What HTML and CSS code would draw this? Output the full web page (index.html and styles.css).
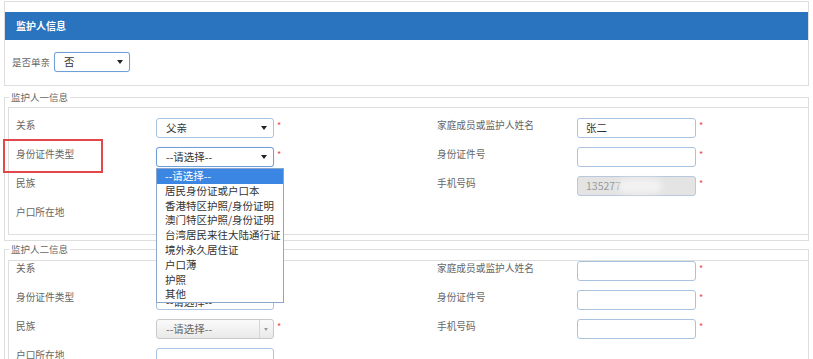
FILE: index.html
```html
<!DOCTYPE html>
<html lang="zh-CN">
<head>
    <meta charset="UTF-8">
    <title>监护人信息</title>
    <link rel="stylesheet" href="styles.css">
</head>
<body>
    <div class="panel">
        <div class="panel-title">监护人信息</div>
        <div class="single-row">
            <span class="single-label">是否单亲</span>
            <div class="select select-single focus"><span>否</span><i class="caret"></i></div>
        </div>
    </div>

    <!-- 监护人一 -->
    <fieldset class="group">
        <legend>监护人一信息</legend>
        <div class="form-grid first">
            <div class="lbl">关系</div>
            <div class="field">
                <div class="select"><span>父亲</span><i class="caret"></i></div>
                <span class="req">*</span>
            </div>
            <div class="lbl">家庭成员或监护人姓名</div>
            <div class="field">
                <div class="input">张二</div>
                <span class="req">*</span>
            </div>

            <div class="lbl marked">身份证件类型</div>
            <div class="field">
                <div class="select focus"><span>--请选择--</span><i class="caret"></i></div>
                <span class="req">*</span>
                <ul class="dropdown">
                    <li class="active">--请选择--</li>
                    <li>居民身份证或户口本</li>
                    <li>香港特区护照/身份证明</li>
                    <li>澳门特区护照/身份证明</li>
                    <li>台湾居民来往大陆通行证</li>
                    <li>境外永久居住证</li>
                    <li>户口薄</li>
                    <li>护照</li>
                    <li>其他</li>
                </ul>
            </div>
            <div class="lbl">身份证件号</div>
            <div class="field">
                <div class="input"></div>
                <span class="req">*</span>
            </div>

            <div class="lbl">民族</div>
            <div class="field">
                <div class="select grey"><i class="btn-caret"></i></div>
                <span class="req">*</span>
            </div>
            <div class="lbl">手机号码</div>
            <div class="field">
                <div class="input disabled">135277<span class="smudge"></span></div>
                <span class="req">*</span>
            </div>

            <div class="lbl">户口所在地</div>
            <div class="field">
                <div class="select"></div>
            </div>
            <div class="lbl"></div>
            <div class="field"></div>
        </div>
    </fieldset>

    <!-- 监护人二 -->
    <fieldset class="group second">
        <legend>监护人二信息</legend>
        <div class="form-grid">
            <div class="lbl">关系</div>
            <div class="field">
                <div class="select"><i class="caret"></i></div>
                <span class="req">*</span>
            </div>
            <div class="lbl">家庭成员或监护人姓名</div>
            <div class="field">
                <div class="input"></div>
                <span class="req">*</span>
            </div>

            <div class="lbl">身份证件类型</div>
            <div class="field">
                <div class="select"><span class="under">--请选择--</span><i class="caret"></i></div>
                <span class="req">*</span>
            </div>
            <div class="lbl">身份证件号</div>
            <div class="field">
                <div class="input"></div>
                <span class="req">*</span>
            </div>

            <div class="lbl">民族</div>
            <div class="field">
                <div class="select grey"><span>--请选择--</span><i class="btn-caret"></i></div>
                <span class="req">*</span>
            </div>
            <div class="lbl">手机号码</div>
            <div class="field">
                <div class="input"></div>
                <span class="req">*</span>
            </div>

            <div class="lbl">户口所在地</div>
            <div class="field">
                <div class="input input-wide"></div>
            </div>
            <div class="lbl"></div>
            <div class="field"></div>
        </div>
    </fieldset>
</body>
</html>
```

FILE: styles.css
```css
* {
    margin: 0;
    padding: 0;
    box-sizing: border-box;
}

body {
    font-family: "Noto Sans CJK SC", "Liberation Sans", sans-serif;
    font-size: 10px;
    color: #666;
    background: #fff;
    width: 813px;
    height: 359px;
    overflow: hidden;
}

.panel {
    margin: 1px 0 0 4px;
    width: 805px;
    border: 1px solid #dedede;
    padding: 10px 0 13px;
}

.panel-title {
    height: 28px;
    line-height: 28px;
    background: #2a74bf;
    color: #fff;
    font-weight: 700;
    font-size: 10px;
    padding-left: 11px;
}

.single-row {
    display: flex;
    align-items: center;
    margin-top: 12px;
    padding-left: 7px;
}

.single-label {
    font-size: 9.5px;
    margin-right: 4px;
    color: #666;
}

.select {
    position: relative;
    width: 118px;
    height: 20px;
    border: 1px solid #a9c2e0;
    border-radius: 3px;
    background: #fff;
    font-size: 10.5px;
    line-height: 18px;
    color: #333;
    padding-left: 9px;
}

.select-single {
    width: 76px;
}

.select.focus {
    border-color: #6e9fd9;
    box-shadow: 0 0 1px rgba(80, 140, 220, 0.4);
}

.caret {
    position: absolute;
    right: 6px;
    top: 7px;
    border-left: 3px solid transparent;
    border-right: 3px solid transparent;
    border-top: 4px solid #222;
}

.select.grey {
    background: linear-gradient(#fafafa, #e9e9e9);
    border-color: #c9c9c9;
    color: #666;
}

.btn-caret {
    position: absolute;
    right: 0;
    top: 0;
    width: 14px;
    height: 18px;
    border-left: 1px solid #d6d6d6;
}

.btn-caret::after {
    content: "";
    position: absolute;
    left: 4px;
    top: 8px;
    border-left: 2px solid transparent;
    border-right: 2px solid transparent;
    border-top: 3px solid #999;
}

.under {
    display: inline-block;
    line-height: 22px;
}

.input {
    position: relative;
    width: 119px;
    height: 20px;
    border: 1px solid #a9c2e0;
    border-radius: 3px;
    background: #fff;
    font-size: 10.5px;
    line-height: 18px;
    color: #333;
    padding-left: 8px;
}

.input-wide {
    width: 118px;
}

.input.disabled {
    background: #e4e4e4;
    border-color: #b9c9dc;
    color: #9a9a9a;
}

.smudge {
    position: absolute;
    left: 40px;
    top: 2px;
    width: 44px;
    height: 14px;
    border-radius: 7px;
    background: #f2f2f2;
    filter: blur(3px);
}

.req {
    color: #e84a4a;
    font-size: 9px;
    line-height: 1;
    margin: 3px 0 0 3px;
}

.group {
    margin: 4px 0 0 4px;
    width: 805px;
    min-width: 0;
    border: 1px solid #dedede;
    padding: 0 0 5px 3px;
}

.group.second {
    margin-top: 1px;
}

.group legend {
    font-size: 9.5px;
    line-height: 14px;
    padding: 0 2px;
    margin-left: 1px;
    color: #666;
}

.form-grid {
    display: grid;
    grid-template-columns: 140px 281px 140px 1fr;
    grid-auto-rows: 29px;
    border-top: 1px solid #dedede;
    border-left: 1px solid #dedede;
    border-bottom: 1px solid #dedede;
    padding-left: 7px;
    margin-top: 4px;
}

.form-grid.first {
    margin-top: 3px;
    padding-top: 10px;
}

.lbl {
    line-height: 14px;
    font-size: 9.7px;
    color: #666;
    white-space: nowrap;
}

.lbl.marked {
    position: relative;
}

.lbl.marked::after {
    content: "";
    position: absolute;
    left: -13px;
    top: -8px;
    width: 96px;
    height: 30px;
    border: 2px solid #e2474a;
}

.field {
    position: relative;
    display: flex;
    align-items: flex-start;
}

.dropdown {
    position: absolute;
    left: 0;
    top: 21px;
    width: 128px;
    z-index: 10;
    list-style: none;
    background: #fff;
    border: 1px solid #8aa7cb;
}

.dropdown li {
    height: 14.8px;
    line-height: 14.8px;
    padding-left: 8px;
    font-size: 10.5px;
    color: #333;
    white-space: nowrap;
}

.dropdown li.active {
    background: #3b86e2;
    color: #fff;
}
```
